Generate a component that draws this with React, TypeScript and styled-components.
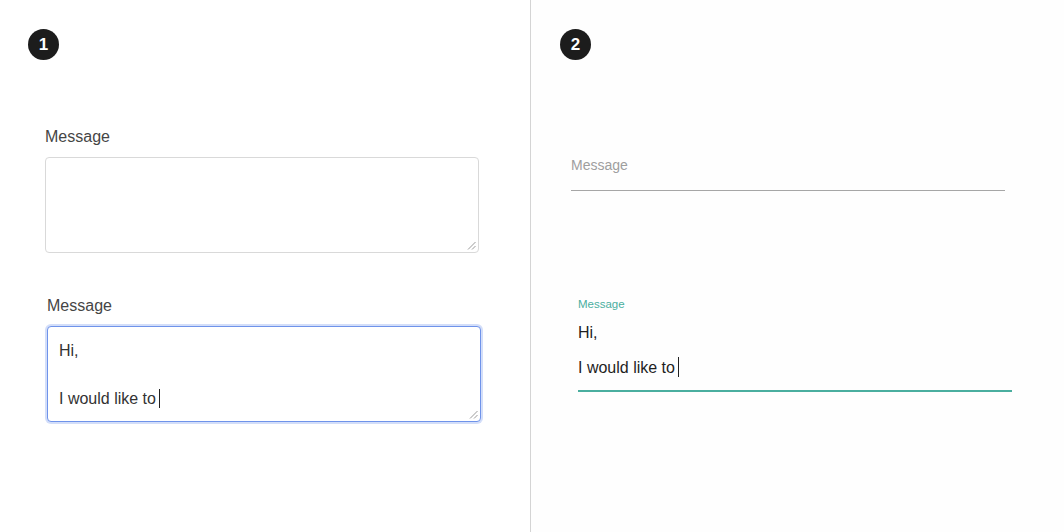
import styled, { createGlobalStyle } from "styled-components";

const GlobalStyle = createGlobalStyle`
  html, body {
    margin: 0;
    padding: 0;
    background: #ffffff;
  }
  body {
    font-family: "Liberation Sans", Arial, sans-serif;
  }
`;

const Page = styled.div`
  display: flex;
  width: 1064px;
  height: 532px;
  overflow: hidden;
`;

const Panel = styled.section<{ $tinted?: boolean }>`
  display: flex;
  flex-direction: column;
  box-sizing: border-box;
  width: ${(p) => (p.$tinted ? "auto" : "530px")};
  flex: ${(p) => (p.$tinted ? "1" : "none")};
  padding: 29px 0 0 ${(p) => (p.$tinted ? "29px" : "28px")};
  background: ${(p) => (p.$tinted ? "#fefefe" : "#ffffff")};
  border-left: ${(p) => (p.$tinted ? "1px solid #d4d4d4" : "none")};
`;

const Badge = styled.div`
  display: flex;
  align-items: center;
  justify-content: center;
  width: 31px;
  height: 31px;
  border-radius: 50%;
  background: #1c1c1c;
  color: #ffffff;
  font-weight: 700;
  font-size: 17px;
`;

/* ---------- bootstrap-ish textarea ---------- */

const BoxField = styled.div<{ $indent: number; $top: number }>`
  display: flex;
  flex-direction: column;
  gap: 8px;
  margin-left: ${(p) => p.$indent}px;
  margin-top: ${(p) => p.$top}px;
  width: 434px;
`;

const BoxLabel = styled.label`
  font-size: 16px;
  line-height: 24px;
  color: #454545;
`;

const TextBox = styled.div<{ $focused?: boolean }>`
  position: relative;
  box-sizing: border-box;
  height: 96px;
  padding: 12px 11px;
  border: 1px solid ${(p) => (p.$focused ? "#6f93ea" : "#d9d9d9")};
  border-radius: 4px;
  background: #ffffff;
  box-shadow: ${(p) => (p.$focused ? "0 0 0 2px rgba(110, 147, 234, 0.3)" : "none")};
  font-size: 16px;
  line-height: 24px;
  color: #333333;
`;

const Line = styled.div`
  min-height: 24px;
  white-space: pre;
`;

const Caret = styled.span<{ $h: number }>`
  display: inline-block;
  width: 1px;
  height: ${(p) => p.$h}px;
  margin-left: 3px;
  background: #222222;
  vertical-align: -4px;
`;

const Grip = styled.svg`
  position: absolute;
  right: 2px;
  bottom: 2px;
  width: 9px;
  height: 9px;
`;

function ResizeGrip() {
  return (
    <Grip viewBox="0 0 9 9">
      <path d="M8.5 1 L1 8.5 M8.5 5 L5 8.5" stroke="#9a9a9a" strokeWidth="1" fill="none" />
    </Grip>
  );
}

/* ---------- material-ish text field ---------- */

const LineField = styled.div<{ $indent: number; $top: number; $focused?: boolean }>`
  display: flex;
  flex-direction: column;
  margin-left: ${(p) => p.$indent}px;
  margin-top: ${(p) => p.$top}px;
  width: 434px;
  padding-bottom: ${(p) => (p.$focused ? "5px" : "15px")};
  border-bottom: ${(p) => (p.$focused ? "2px solid #4aae9f" : "1px solid #a6a6a6")};
`;

const Placeholder = styled.span`
  font-size: 14px;
  line-height: 20px;
  color: #9e9e9e;
`;

const FloatLabel = styled.span`
  font-size: 11.5px;
  line-height: 14px;
  color: #4aae9f;
  margin-bottom: 4px;
`;

const FieldText = styled.div`
  font-size: 16px;
  line-height: 35px;
  color: #1f1f1f;
  white-space: pre;
`;

export default function App() {
  return (
    <>
      <GlobalStyle />
      <Page>
        <Panel>
          <Badge>1</Badge>

          <BoxField $indent={17} $top={65}>
            <BoxLabel>Message</BoxLabel>
            <TextBox>
              <ResizeGrip />
            </TextBox>
          </BoxField>

          <BoxField $indent={19} $top={41}>
            <BoxLabel>Message</BoxLabel>
            <TextBox $focused>
              <Line>Hi,</Line>
              <Line> </Line>
              <Line>
                I would like to
                <Caret $h={19} />
              </Line>
              <ResizeGrip />
            </TextBox>
          </BoxField>
        </Panel>

        <Panel $tinted>
          <Badge>2</Badge>

          <LineField $indent={11} $top={95}>
            <Placeholder>Message</Placeholder>
          </LineField>

          <LineField $indent={18} $top={106} $focused>
            <FloatLabel>Message</FloatLabel>
            <FieldText>Hi,</FieldText>
            <FieldText>
              I would like to
              <Caret $h={20} />
            </FieldText>
          </LineField>
        </Panel>
      </Page>
    </>
  );
}
